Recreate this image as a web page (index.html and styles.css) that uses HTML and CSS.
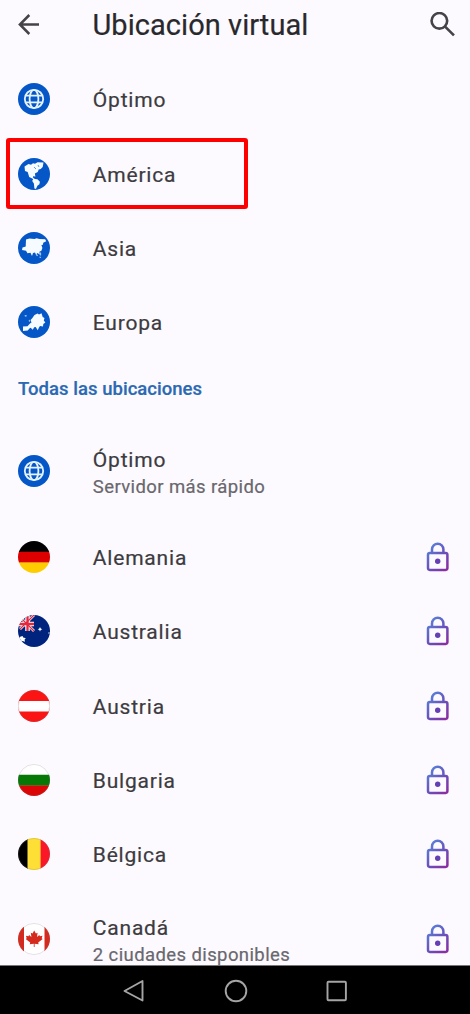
FILE: index.html
```html
<!DOCTYPE html>
<html lang="es">
<head>
<meta charset="utf-8">
<title>Ubicación virtual</title>
<link rel="stylesheet" href="styles.css">
</head>
<body>
<svg class="defs" width="0" height="0" aria-hidden="true">
  <defs>
    <linearGradient id="lockInk" gradientUnits="userSpaceOnUse" x1="2" y1="8" x2="22" y2="28">
      <stop offset="0" stop-color="#5b7bd6"/><stop offset=".5" stop-color="#6a4fba"/><stop offset="1" stop-color="#8e2a9e"/>
    </linearGradient>
    <clipPath id="disc"><circle cx="16" cy="16" r="16"/></clipPath>
    <symbol id="lock" viewBox="0 0 24 30">
      <g fill="none" stroke="url(#lockInk)" stroke-width="2.500">
        <rect x="2" y="11.100" width="19.400" height="16.800" rx="1.800"/>
        <path d="M6 11V7.500a5.700 5.700 0 0 1 11.400 0V11"/>
      </g>
      <circle cx="11.700" cy="19.300" r="2.700" fill="#6540b4"/>
    </symbol>
    <symbol id="globe" viewBox="0 0 32 32">
      <circle cx="16" cy="16" r="16" fill="#0557c7"/>
      <g fill="none" stroke="#e4f3ff" stroke-width="1.800">
        <circle cx="16" cy="16" r="9.200"/>
        <ellipse cx="16" cy="16" rx="4.400" ry="9.200"/>
        <path d="M7.800 12.600h16.400M7.800 19.400h16.400"/>
      </g>
    </symbol>
  </defs>
</svg>
<div class="screen">
  <main class="app">
    <header class="bar">
      <svg class="back" viewBox="0 0 22 22"><path d="M21 10.500H2M11.300 1L1.900 10.500l9.400 9.500"/></svg>
      <h1 class="title">Ubicación virtual</h1>
      <svg class="search" viewBox="0 0 24 24"><circle cx="9" cy="8.500" r="7.500"/><path d="M14.500 14l8.500 8.500"/></svg>
    </header>
    <ul class="list">
      <li class="row"><svg class="badge"><use href="#globe"/></svg><span class="name">Óptimo</span></li>
      <li class="row row-marked">
        <svg class="badge" viewBox="0 0 32 32"><circle cx="16" cy="16" r="16" fill="#0557c7"/>
          <path fill="#f5fbff" d="M6.500 8.500l4-2.500 2.500.8 2-1.500 2 .4 2.500-1.500 6 .3-.8 4.500-2 2-2 .5-1 2.500-2.800 1.500.5 3-2.300-.3-.2 1.400 2 1.500 2.500.2 2.500 2.400-.5 2.500-2 1.500-1.500 3.300-1.500-.5-.5-5-1.700-2.500 1-1.900-4-2.200-1.500-5L7 13z"/><path fill="none" stroke="#5b9ce5" d="M16 9l2 2M20 7l1 2"/></svg>
        <span class="name">América</span></li>
      <li class="row">
        <svg class="badge" viewBox="0 0 32 32"><circle cx="16" cy="16" r="16" fill="#0557c7"/>
          <path fill="#f5fbff" d="M8 7.500l3.500-1 5 .5 2-.8 3 .8 5.700.3 1 2-3 1.400-.2 2-1.600.3 1 3-1 2.700-2 1 .5 3-1.700-1.200-1-.5-.7 2.800-1.500-3.300-2 .4-1 3.200-1.500-3.300-3 .5-1.500-2.500-4-.8.500-2.500 3.200-1z"/><path fill="none" stroke="#9ccaf5" stroke-width="1.200" d="M18 21.500l1.500 2.500M22.500 20.500v3M21.500 25l1.500.5"/></svg>
        <span class="name">Asia</span></li>
      <li class="row">
        <svg class="badge" viewBox="0 0 32 32"><circle cx="16" cy="16" r="16" fill="#0557c7"/>
          <path fill="#f5fbff" d="M5 20.500l4.500-.3 2.500-2.700 1.500-1-1-2.500 1.500-1.500 2.500-3.500 3-1.500 1.500 1 2.500-1.200 1.200 3.700 1.800 1-.7 2.500 1.500 2-2 1.500-.3 2.500-3-.5-1 1.500-1.300 2.700-2-3.200-1.500.3-1.500 2.500-2-2-1 .5-2 2.200-4.700.5z"/><path fill="#b9dcfa" d="M6.500 9.500l2-.5v1.500H7zM10.500 15l1-1.500.7 2.500z"/></svg>
        <span class="name">Europa</span></li>
    </ul>
    <h2 class="section">Todas las ubicaciones</h2>
    <ul class="list">
      <li class="row row-tall"><svg class="badge"><use href="#globe"/></svg><span class="name">Óptimo<small class="note">Servidor más rápido</small></span></li>
      <li class="row">
        <svg class="badge" viewBox="0 0 32 32"><g clip-path="url(#disc)"><path fill="#000" d="M0 0h32v11H0z"/><path fill="#dc0000" d="M0 10.700h32v11H0z"/><path fill="#fc0" d="M0 21.500h32V32H0z"/></g></svg>
        <span class="name">Alemania</span><svg class="lock"><use href="#lock"/></svg></li>
      <li class="row">
        <svg class="badge" viewBox="0 0 32 32"><g clip-path="url(#disc)"><path fill="#00247d" d="M0 0h32v32H0z"/>
          <path stroke="#fff" stroke-width="2.600" d="M0 0l16 16M16 0L2 14"/><path stroke="#fff" stroke-width="4.500" d="M9.500 0v16M0 9h16"/><path stroke="#e5283f" stroke-width="1.300" d="M0 0l16 16M16 0L2 14"/><path stroke="#e5283f" stroke-width="2.300" d="M9.500 0v16M0 9h16"/>
          <path fill="#fff" d="M22 12l.7 1.600 1.600.7-1.600.7-.7 1.600-.7-1.600-1.600-.7 1.600-.7zM4.500 21l1 1.800 2.300.2-1.300 1.800.6 2-2.600-.8-3 .5V22z"/><circle cx="31" cy="18" r=".7" fill="#fff"/></g></svg>
        <span class="name">Australia</span><svg class="lock"><use href="#lock"/></svg></li>
      <li class="row">
        <svg class="badge" viewBox="0 0 32 32"><g clip-path="url(#disc)"><path fill="#fb1414" d="M0 0h32v32H0z"/><path fill="#fff" d="M0 11h32v10.500H0z"/></g><circle class="rim" cx="16" cy="16" r="15.600"/></svg>
        <span class="name">Austria</span><svg class="lock"><use href="#lock"/></svg></li>
      <li class="row">
        <svg class="badge" viewBox="0 0 32 32"><g clip-path="url(#disc)"><path fill="#fff" d="M0 0h32v11H0z"/><path fill="#067806" d="M0 10.800h32v11H0z"/><path fill="#dc0505" d="M0 21.400h32V32H0z"/></g><circle class="rim" cx="16" cy="16" r="15.600"/></svg>
        <span class="name">Bulgaria</span><svg class="lock"><use href="#lock"/></svg></li>
      <li class="row">
        <svg class="badge" viewBox="0 0 32 32"><g clip-path="url(#disc)"><path fill="#000" d="M0 0h10v32H0z"/><path fill="#fedf36" d="M9.500 0H23v32H9.500z"/><path fill="#fa1728" d="M22.600 0H32v32h-9.400z"/></g><circle class="rim" cx="16" cy="16" r="15.600"/></svg>
        <span class="name">Bélgica</span><svg class="lock"><use href="#lock"/></svg></li>
      <li class="row row-last">
        <svg class="badge" viewBox="0 0 32 32"><g clip-path="url(#disc)"><path fill="#fff" d="M0 0h32v32H0z"/><path fill="#d52b1e" d="M0 0h6v32H0zM26.500 0H32v32h-5.500zM16.200 7.500l1.700 3 1.700-.8-.6 4.200 2.300-2 .6 1.300 2.600-.4-.8 2.500 1 .8-4.500 3.500.4 1.600-4-.5V24h-.8v-3.300l-4 .5.400-1.600-4.500-3.500 1-.8-.8-2.500 2.600.4.600-1.300 2.300 2-.6-4.200 1.700.8z"/></g><circle class="rim" cx="16" cy="16" r="15.600"/></svg>
        <span class="name">Canadá<small class="note">2 ciudades disponibles</small></span><svg class="lock"><use href="#lock"/></svg></li>
    </ul>
  </main>
  <nav class="nav">
    <svg class="key" viewBox="0 0 24 24"><path d="M20.500 2v19.500L2.500 12z"/></svg>
    <svg class="key" viewBox="0 0 24 24"><circle cx="12" cy="12" r="10.300"/></svg>
    <svg class="key" viewBox="0 0 24 24"><rect x="2.500" y="2.800" width="18.400" height="18.400" rx="1"/></svg>
  </nav>
</div>
</body>
</html>
```
FILE: styles.css
```css
* { box-sizing: border-box; }
body { margin: 0; background: #fcfaff; font-family: Roboto, "Liberation Sans", sans-serif; color: #3c3b40; }
.defs { position: absolute; }
.screen { display: flex; flex-direction: column; width: 470px; height: 1014px; overflow: hidden; }
.app { height: 965px; overflow: hidden; }
.bar { display: flex; align-items: center; height: 62.3px; padding: 0 15px 13.300px 18px; }
.back, .search { fill: none; stroke: #454348; stroke-width: 2.500; flex: none; }
.back { width: 22px; height: 22px; }
.search { width: 25px; height: 25px; stroke-width: 2.500; }
.title { flex: 1; margin: 0; padding-left: 52.500px; font-size: 29px; font-weight: 400; line-height: 40px; letter-spacing: .05px; color: #29282c; -webkit-text-stroke: .2px; }
.list { margin: 0; padding: 0; list-style: none; }
.row { position: relative; display: flex; align-items: center; height: 74.330px; padding: 0 20px 0 18px; }
.row-tall { height: 97.600px; }
.row-last { height: 95px; }
.row-marked::after { content: ""; box-sizing: border-box; position: absolute; left: 6px; top: 1px; width: 242px; height: 71px; border: 4px solid #fe0000; border-radius: 3px; }
.badge { width: 32px; height: 32px; flex: none; }
.rim { fill: none; stroke: #77707a; stroke-opacity: .25; stroke-width: .8; }
.name { flex: 1; padding: 3px 0 0 42.800px; font-size: 21px; line-height: 27px; letter-spacing: .8px; -webkit-text-stroke: .2px; }
.row-tall .name { padding-top: 4px; }
.row-last .name { padding-top: 6px; }
.note { display: block; font-size: 18.500px; line-height: 26px; letter-spacing: .4px; color: #69676d; }
.lock { width: 24px; height: 30px; flex: none; }
.section { height: 62.600px; margin: 0; padding: 16px 18px 0; font-size: 18.500px; font-weight: 500; line-height: 27px; letter-spacing: .03px; color: #2b69b3; -webkit-text-stroke: .2px; }
.nav { display: flex; align-items: center; gap: 77.500px; height: 49px; padding: 2px 0 0 122px; background: #000; border-top: 1px solid #77757a; }
.key { width: 24px; height: 24px; fill: none; stroke: #a5a5a5; stroke-width: 1.900; stroke-linejoin: round; }
```
